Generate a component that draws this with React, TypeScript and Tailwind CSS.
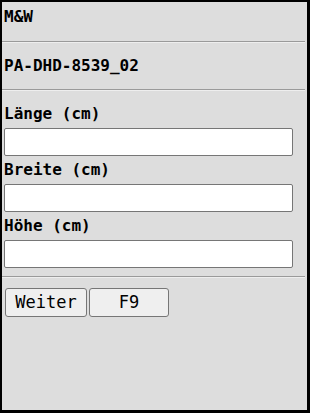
import React from "react";

const mono = { fontFamily: '"DejaVu Sans Mono", "Liberation Mono", monospace' };

function Rule() {
  return <div className="mr-[2px] border-t border-b border-t-[#9a9a9a] border-b-[#eeeeee]" />;
}

function Field({ label, first }: { label: string; first?: boolean }) {
  return (
    <div className="flex flex-col">
      <div
        className={
          first
            ? "pl-[2px] h-[37px] flex items-end pb-[6px] font-bold text-[16px] text-black leading-none"
            : "pl-[2px] h-[28px] flex items-end pb-[6px] font-bold text-[16px] text-black leading-none"
        }
      >
        {label}
      </div>
      <input className="ml-[2px] w-[289px] h-[28px] bg-white border border-[#767676] rounded-[2px] outline-none" />
    </div>
  );
}

export default function App() {
  return (
    <div
      style={mono}
      className="w-[310px] h-[413px] bg-[#dddddd] border-l-2 border-t-2 border-r-[3px] border-b-[3px] border-black flex flex-col"
    >
      <div className="h-[39px] flex items-center pl-[2px] pb-[9px] font-bold text-[16px] text-black">M&amp;W</div>
      <Rule />
      <div className="h-[46px] flex items-center pl-[2px] font-bold text-[16px] text-black">PA-DHD-8539_02</div>
      <Rule />
      <div className="flex flex-col">
        <Field label="Länge (cm)" first />
        <Field label="Breite (cm)" />
        <Field label="Höhe (cm)" />
      </div>
      <div className="mt-[8px]">
        <Rule />
      </div>
      <div className="flex gap-[2px] pl-[3px] mt-[10px]">
        <button className="w-[82px] h-[29px] bg-[#efefef] border border-[#767676] rounded-[3px] text-[17px] text-black">Weiter</button>
        <button className="w-[80px] h-[29px] bg-[#efefef] border border-[#767676] rounded-[3px] text-[17px] text-black">F9</button>
      </div>
    </div>
  );
}
